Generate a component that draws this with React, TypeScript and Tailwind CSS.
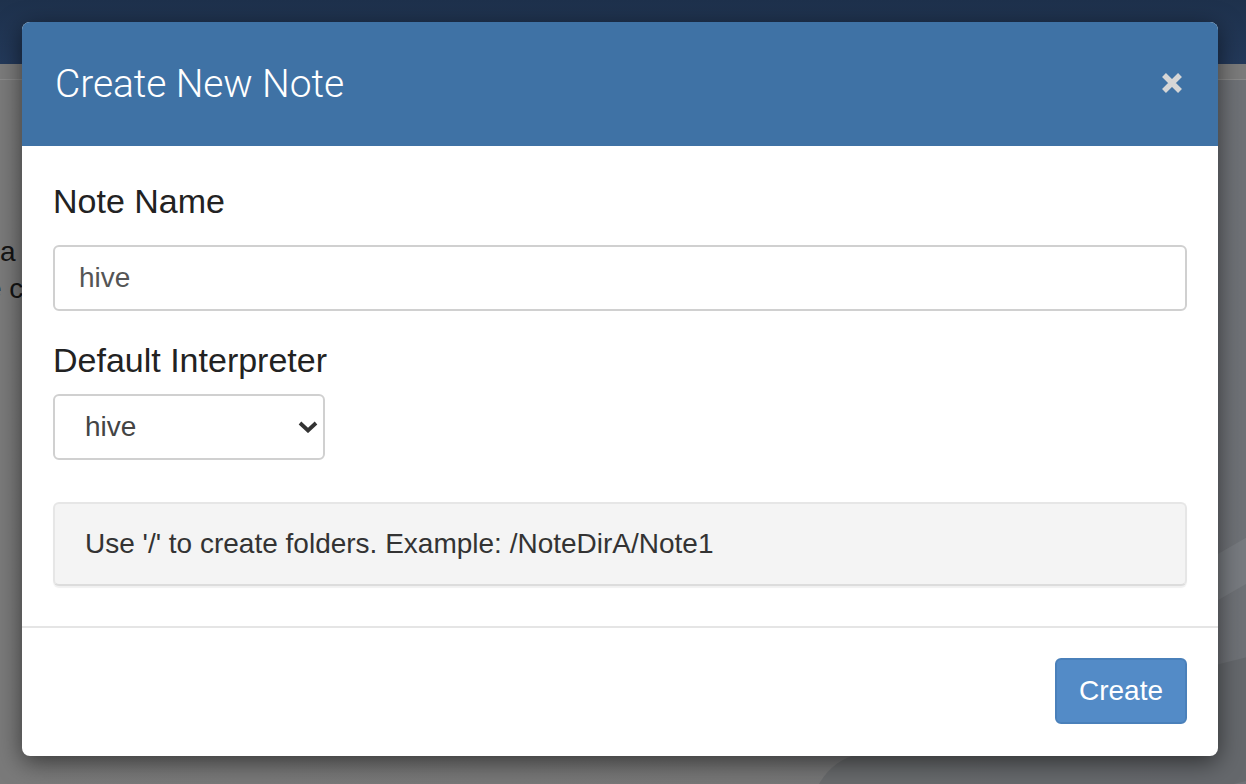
import { useState } from "react";

const INTERPRETERS = ["hive", "spark", "md", "sh", "python", "jdbc"];

function CloseIcon() {
  return (
    <svg width="24" height="24" viewBox="0 0 24 24" className="block">
      <path d="M4 4 L20 20 M20 4 L4 20" stroke="#d6d6d6" strokeWidth="5.5" strokeLinecap="butt" fill="none" />
    </svg>
  );
}

function Chevron() {
  return (
    <svg width="20" height="12" viewBox="0 0 20 12" className="block">
      <path d="M2 2 L10 9.5 L18 2" stroke="#333" strokeWidth="3.8" fill="none" strokeLinejoin="miter" />
    </svg>
  );
}

function CreateNoteModal() {
  const [name, setName] = useState("hive");
  const [interpreter, setInterpreter] = useState("hive");

  const labelClass = "block text-[34px] leading-10 text-[#222]";

  return (
    <div className="absolute left-[22px] top-[22px] w-[1196px] overflow-hidden rounded-lg bg-white shadow-[0_6px_24px_rgba(0,0,0,0.55)]">
      <div className="flex h-[124px] items-center justify-between bg-[#3f72a5] pl-[33px] pr-[34px]">
        <h2 className="font-['Roboto',sans-serif] text-[39px] font-light tracking-[-0.1px] text-white">Create New Note</h2>
        <button type="button" className="mt-[-2px]">
          <CloseIcon />
        </button>
      </div>

      <div className="px-[31px] pb-[40px] pt-[35px]">
        <label className={labelClass}>Note Name</label>
        <input
          value={name}
          onChange={(event) => setName(event.target.value)}
          className="mt-[24px] block h-[66px] w-full rounded-md border-2 border-[#d0d0d0] bg-white px-[24px] text-[28px] text-[#555] outline-none"
        />

        <label className={`${labelClass} mt-[29px]`}>Default Interpreter</label>
        <div className="relative mt-[14px] w-[272px]">
          <select
            value={interpreter}
            onChange={(event) => setInterpreter(event.target.value)}
            className="block h-[66px] w-full appearance-none rounded-md border-2 border-[#d0d0d0] bg-white pl-[30px] text-[28px] text-[#444] outline-none"
          >
            {INTERPRETERS.map((option) => (
              <option key={option} value={option}>{option}</option>
            ))}
          </select>
          <div className="pointer-events-none absolute right-[7px] top-[27px]">
            <Chevron />
          </div>
        </div>

        <div className="mt-[42px] flex h-[84px] items-center rounded-md border-2 border-[#e6e6e6] border-b-[#dcdcdc] bg-[#f4f4f4] px-[30px] text-[28px] text-[#333] shadow-[0_2px_1px_rgba(0,0,0,0.06)]">
          Use '/' to create folders. Example: /NoteDirA/Note1
        </div>
      </div>

      <div className="flex justify-end border-t-2 border-[#e5e5e5] px-[31px] pb-[32px] pt-[30px]">
        <button
          type="button"
          className="h-[66px] w-[132px] rounded-md border-2 border-[#4a80ba] bg-[#538bc7] text-[28px] text-white"
        >
          Create
        </button>
      </div>
    </div>
  );
}

export default function App() {
  return (
    <div className="relative h-[784px] w-[1246px] overflow-hidden bg-[linear-gradient(90deg,#7a7a7a_0%,#777_60%,#6e7176_100%)] font-['Liberation_Sans',Arial,sans-serif]">
      <div className="h-16 bg-[linear-gradient(180deg,#1e314c_0%,#23395a_100%)]" />
      <div className="h-4 border-b border-[#8a8a8a] bg-[#7b7b7b]" />
      <div className="pt-[153px] text-[28px] leading-[37px] text-[#141414]">
        <p>a</p>
        <p className="ml-[-14px]">e c</p>
      </div>
      <div className="absolute bottom-[-40px] right-[-80px] h-[120px] w-[520px] rotate-[-14deg] rounded-full bg-[#5f6266] opacity-60" />
      <div className="absolute bottom-[180px] right-[-60px] h-[40px] w-[200px] rotate-[-30deg] rounded-full bg-[#808387] opacity-50" />
      <CreateNoteModal />
    </div>
  );
}
